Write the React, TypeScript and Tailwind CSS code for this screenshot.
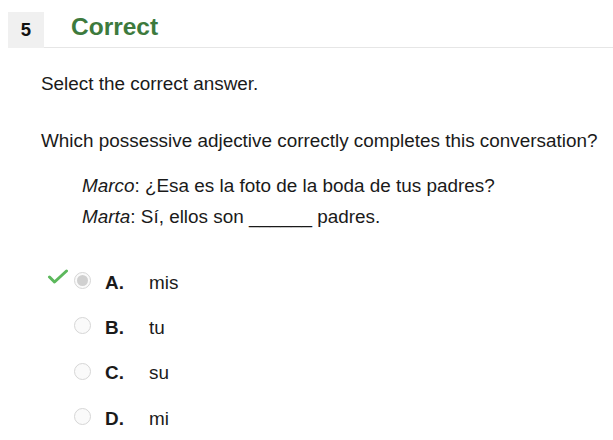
import React from "react";

const options = [
  { letter: "A.", text: "mis", selected: true },
  { letter: "B.", text: "tu" },
  { letter: "C.", text: "su" },
  { letter: "D.", text: "mi" },
];

export default function App() {
  return (
    <div className="w-[613px] h-[440px] bg-white overflow-hidden text-[#1a1a1a]" style={{ fontFamily: '"Liberation Sans", Arial, sans-serif' }}>
      <div className="ml-2 mt-3 flex items-center h-9 border-b border-[#e6e6e6]">
        <div className="w-9 h-9 bg-[#f0f0f0] flex items-center justify-center text-[18.5px] font-bold text-[#111]">5</div>
        <div className="ml-[27px] text-[24.5px] font-bold text-[#3d7a3d] -mt-[4px]">Correct</div>
      </div>
      <div className="pl-[41px] text-[18.9px]">
        <p className="mt-[24px] leading-[24px]">Select the correct answer.</p>
        <p className="mt-[33px] leading-[24px]">Which possessive adjective correctly completes this conversation?</p>
        <div className="pl-[41px] mt-[21px]">
          <p className="leading-[24px]"><i>Marco</i>: ¿Esa es la foto de la boda de tus padres?</p>
          <p className="leading-[24px] mt-[7px]"><i>Marta</i>: Sí, ellos son ______ padres.</p>
        </div>
        <div className="mt-[42px] flex flex-col gap-[21.33px]">
          {options.map((o) => (
            <div key={o.letter} className="flex items-center h-[24px] relative">
              {o.selected && (
                <svg className="absolute left-[6px] -top-[2px]" width="22" height="16" viewBox="0 0 22 16">
                  <path d="M2.5 8 L7.5 13 L19.5 2" fill="none" stroke="#5cb85c" strokeWidth="3" strokeLinecap="round" strokeLinejoin="round" />
                </svg>
              )}
              <div className="ml-[33px] -mt-[5px] w-[17px] h-[17px] rounded-full border border-[#d6d6d6] bg-[#fafafa] flex items-center justify-center">
                {o.selected && <div className="w-[11px] h-[11px] rounded-full bg-[#d0d0d0]" />}
              </div>
              <span className="ml-[14px] w-[44px] font-bold">{o.letter}</span>
              <span>{o.text}</span>
            </div>
          ))}
        </div>
      </div>
    </div>
  );
}
